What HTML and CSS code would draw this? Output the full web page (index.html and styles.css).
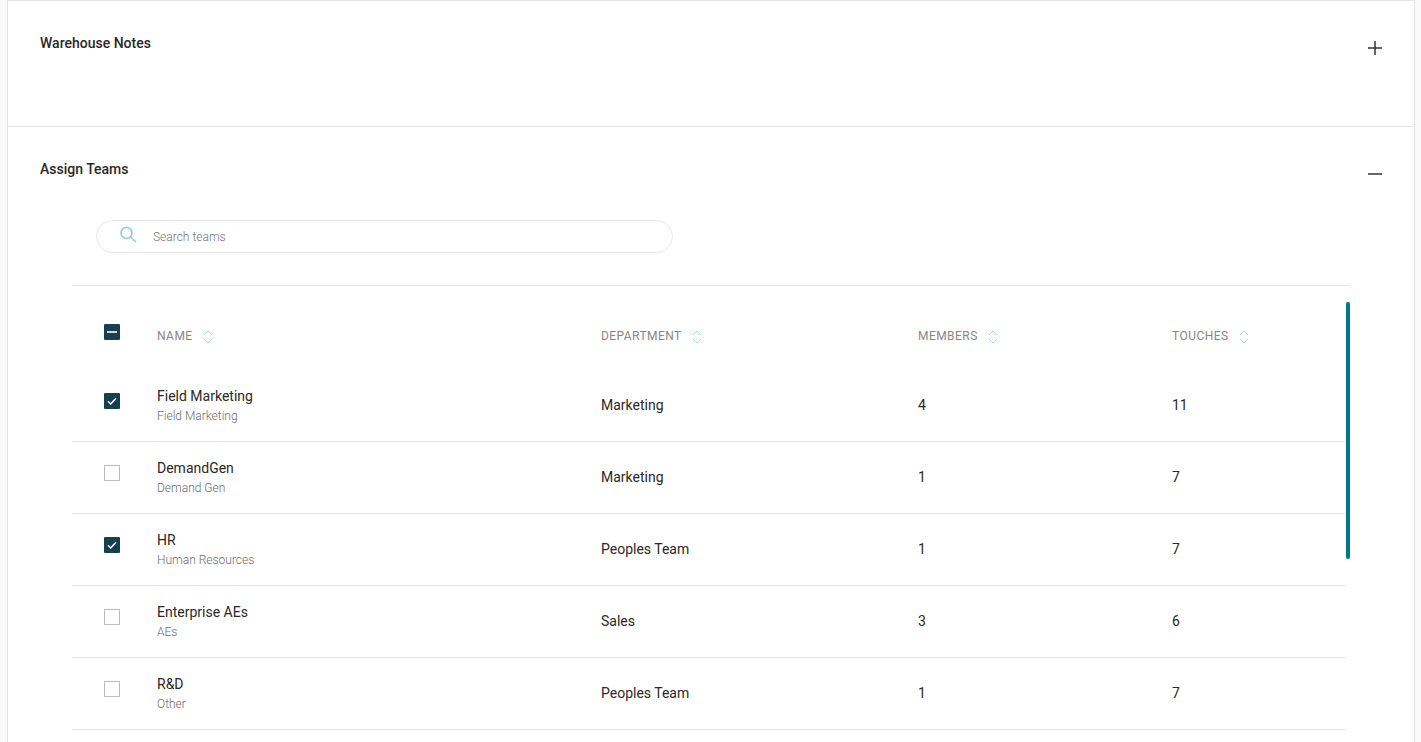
FILE: index.html
```html
<!DOCTYPE html>
<html lang="en">
<head>
<meta charset="utf-8">
<title>Assign Teams</title>
<link rel="stylesheet" href="styles.css">
</head>
<body>
<main class="card">
  <section class="panel panel-notes">
    <div class="panel-head">
      <h2 class="panel-title">Warehouse Notes</h2>
      <svg class="toggle" width="16" height="16" viewBox="0 0 16 16"><path d="M8 1v14M1 8h14" fill="none" stroke="#34312f" stroke-width="1.5"/></svg>
    </div>
  </section>
  <section class="panel panel-teams">
    <div class="panel-head">
      <h2 class="panel-title">Assign Teams</h2>
      <svg class="toggle" width="16" height="16" viewBox="0 0 16 16"><path d="M1 8h14" fill="none" stroke="#34312f" stroke-width="1.5"/></svg>
    </div>
    <div class="search">
      <svg class="search-icon" width="18" height="18" viewBox="0 0 18 18"><circle cx="7.5" cy="7" r="5.5" fill="none" stroke="#8ccfd0" stroke-width="1.5"/><path d="M11.5 11l5.5 5" fill="none" stroke="#8ccfd0" stroke-width="1.5"/></svg>
      <span class="search-text">Search teams</span>
    </div>
    <div class="table">
      <div class="scrollbar"></div>
      <div class="row head">
        <span class="box box-on box-head"><svg width="16" height="16" viewBox="0 0 16 16"><path d="M3 8h10" stroke="#fff" stroke-width="1.6"/></svg></span>
        <span class="th">NAME <svg class="sort" width="10" height="14" viewBox="0 0 10 14"><path d="M1 5l4-4 4 4M1 9l4 4 4-4" fill="none" stroke="#a5dbdb" stroke-width="1"/></svg></span>
        <span class="th">DEPARTMENT <svg class="sort" width="10" height="14" viewBox="0 0 10 14"><path d="M1 5l4-4 4 4M1 9l4 4 4-4" fill="none" stroke="#a5dbdb" stroke-width="1"/></svg></span>
        <span class="th">MEMBERS <svg class="sort" width="10" height="14" viewBox="0 0 10 14"><path d="M1 5l4-4 4 4M1 9l4 4 4-4" fill="none" stroke="#a5dbdb" stroke-width="1"/></svg></span>
        <span class="th">TOUCHES <svg class="sort" width="10" height="14" viewBox="0 0 10 14"><path d="M1 5l4-4 4 4M1 9l4 4 4-4" fill="none" stroke="#a5dbdb" stroke-width="1"/></svg></span>
      </div>
      <div class="row">
        <span class="box box-on"><svg width="16" height="16" viewBox="0 0 16 16"><path d="M4 8.3l2.7 2.7L12 5.2" fill="none" stroke="#fff" stroke-width="1.5"/></svg></span>
        <div class="name"><div class="primary">Field Marketing</div><div class="secondary">Field Marketing</div></div>
        <span class="cell">Marketing</span><span class="cell">4</span><span class="cell">11</span>
      </div>
      <div class="row">
        <span class="box"></span>
        <div class="name"><div class="primary">DemandGen</div><div class="secondary">Demand Gen</div></div>
        <span class="cell">Marketing</span><span class="cell">1</span><span class="cell">7</span>
      </div>
      <div class="row">
        <span class="box box-on"><svg width="16" height="16" viewBox="0 0 16 16"><path d="M4 8.3l2.7 2.7L12 5.2" fill="none" stroke="#fff" stroke-width="1.5"/></svg></span>
        <div class="name"><div class="primary">HR</div><div class="secondary">Human Resources</div></div>
        <span class="cell">Peoples Team</span><span class="cell">1</span><span class="cell">7</span>
      </div>
      <div class="row">
        <span class="box"></span>
        <div class="name"><div class="primary">Enterprise AEs</div><div class="secondary">AEs</div></div>
        <span class="cell">Sales</span><span class="cell">3</span><span class="cell">6</span>
      </div>
      <div class="row">
        <span class="box"></span>
        <div class="name"><div class="primary">R&amp;D</div><div class="secondary">Other</div></div>
        <span class="cell">Peoples Team</span><span class="cell">1</span><span class="cell">7</span>
      </div>
    </div>
  </section>
</main>
</body>
</html>
```
FILE: styles.css
```css
* { box-sizing: border-box; }
html, body { margin: 0; height: 742px; overflow: hidden; }
body {
  background: #fafafa;
  font-family: Roboto, "Liberation Sans", sans-serif;
  color: #2b2826;
  padding: 0 6px 0 7px;
}
.card {
  background: #fff;
  border: 1px solid #e6e6e6;
  border-bottom: 0;
  height: 742px;
  overflow: hidden;
}
.panel-notes { height: 126px; border-bottom: 1px solid #e6e6e6; }
.panel-head {
  display: flex;
  justify-content: space-between;
  align-items: flex-start;
  padding: 34px 31px 0 32px;
}
.panel-title { margin: 0; font-size: 14px; line-height: 17px; font-weight: 500; }
.toggle { margin-top: 5px; }
.search {
  display: flex;
  align-items: center;
  width: 577px;
  height: 33px;
  margin: 38px 0 0 88px;
  border: 1px solid #e6e6e6;
  border-radius: 17px;
  padding-left: 22px;
}
.search-icon { margin-top: -3px; }
.search-text { margin-left: 16px; font-size: 12px; font-weight: 300; color: #777; }
.table { position: relative; width: 1278px; margin: 32px 0 0 64px; border-top: 1px solid #e6e6e6; }
.scrollbar {
  position: absolute;
  right: 0;
  top: 16px;
  width: 4px;
  height: 257px;
  border-radius: 2px;
  background: #007a87;
}
.row {
  display: grid;
  grid-template-columns: 85px 444px 317px 254px 174px;
  align-items: center;
  width: 1274px;
  height: 72px;
  border-bottom: 1px solid #e6e6e6;
}
.row.head { height: 84px; border-bottom: 0; padding-top: 16px; }
.box {
  display: block;
  width: 16px;
  height: 16px;
  margin: -10px 0 0 32px;
  border: 1px solid #bdbdbd;
}
.box-on { background: #163f4f; border: 0; border-radius: 1px; }
.box-on svg { display: block; }
.box-head { margin-top: -8px; }
.th { display: flex; align-items: center; gap: 7px; font-size: 12px; font-weight: 400; letter-spacing: 0.45px; color: #8a8582; white-space: pre; }
.sort { margin-top: 1px; }
.primary { font-size: 14px; line-height: 18px; }
.secondary { margin-top: 3px; font-size: 12px; line-height: 16px; font-weight: 300; color: #6f6b68; }
.cell { margin-top: -2px; font-size: 14px; line-height: 18px; }
```
